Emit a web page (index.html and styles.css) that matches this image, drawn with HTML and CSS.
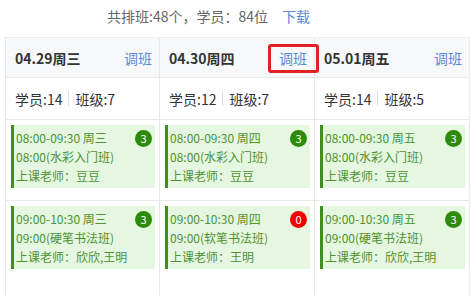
FILE: index.html
```html
<!DOCTYPE html>
<html lang="zh">
<head>
<meta charset="utf-8">
<link rel="stylesheet" href="styles.css">
</head>
<body>
<div class="summary"><span>共排班:48个，学员：84位</span><a class="link">下载</a></div>
<div class="table">
  <div class="cell head"><span class="date">04.29周三</span><a class="link">调班</a></div>
  <div class="cell head"><span class="date">04.30周四</span><a class="link marked">调班</a></div>
  <div class="cell head"><span class="date">05.01周五</span><a class="link">调班</a></div>

  <div class="cell stats"><span>学员:14</span><i class="sep"></i><span>班级:7</span></div>
  <div class="cell stats"><span>学员:12</span><i class="sep"></i><span>班级:7</span></div>
  <div class="cell stats"><span>学员:14</span><i class="sep"></i><span>班级:5</span></div>

  <div class="cell slot"><div class="card"><p>08:00-09:30 周三</p><p>08:00(水彩入门班)</p><p>上课老师：豆豆</p><b class="badge">3</b></div></div>
  <div class="cell slot"><div class="card"><p>08:00-09:30 周四</p><p>08:00(水彩入门班)</p><p>上课老师：豆豆</p><b class="badge">3</b></div></div>
  <div class="cell slot"><div class="card"><p>08:00-09:30 周五</p><p>08:00(水彩入门班)</p><p>上课老师：豆豆</p><b class="badge">3</b></div></div>

  <div class="cell slot last"><div class="card"><p>09:00-10:30 周三</p><p>09:00(硬笔书法班)</p><p>上课老师：欣欣,王明</p><b class="badge">3</b></div></div>
  <div class="cell slot last"><div class="card"><p>09:00-10:30 周四</p><p>09:00(软笔书法班)</p><p>上课老师：王明</p><b class="badge zero">0</b></div></div>
  <div class="cell slot last"><div class="card"><p>09:00-10:30 周五</p><p>09:00(硬笔书法班)</p><p>上课老师：欣欣,王明</p><b class="badge">3</b></div></div>
</div>
</body>
</html>
```

FILE: styles.css
```css
* { box-sizing: border-box; }
html, body { margin: 0; padding: 0; background: #fff; overflow: hidden; }
body {
  font-family: "Noto Sans CJK SC", "Noto Sans", sans-serif;
  font-size: 14px;
  color: #333;
  width: 470px;
  height: 295px;
}
.summary {
  height: 37px;
  padding: 6px 0 0 107px;
  line-height: 20px;
  color: #666;
  display: flex;
  gap: 14px;
}
.link { color: #5b88d6; cursor: pointer; }
.table {
  margin-left: 5px;
  display: grid;
  grid-template-columns: 154px 155px 155px;
  border-left: 1px solid #e8e8e8;
  border-top: 1px solid #ececec;
}
.cell { border-right: 1px solid #e8e8e8; border-bottom: 1px solid #e8e8e8; }
.head {
  height: 40px;
  background: #f7f8fa;
  display: flex;
  align-items: center;
  justify-content: space-between;
  padding: 0 7px 0 9px;
}
.date { font-weight: bold; color: #333; }
.marked { position: relative; }
.marked::after {
  content: "";
  position: absolute;
  left: -11px; right: -12px; top: -4px; bottom: -5px;
  border: 3px solid #e02222;
  border-radius: 3px;
}
.stats {
  height: 42px;
  display: flex;
  align-items: center;
  padding-left: 9px;
  color: #333;
}
.sep { display: inline-block; width: 1px; height: 15px; background: #ddd; margin: 0 6px; }
.slot { height: 81px; padding: 5px 4px 0 5px; }
.slot.last { height: 100px; border-bottom: none; }
.card {
  position: relative;
  height: 63px;
  background: #e5f6e1;
  border-left: 3px solid #3f8f1c;
  padding: 3px 0 0 2px;
  color: #4f9232;
  font-size: 12px;
  line-height: 19px;
}
.card p { margin: 0; white-space: nowrap; }
.badge {
  position: absolute;
  right: 3px; top: 5px;
  width: 17px; height: 17px;
  border-radius: 50%;
  background: #2e8a0b;
  color: #fff;
  font-weight: normal;
  font-size: 11px;
  line-height: 17px;
  text-align: center;
}
.badge.zero { background: #f00000; }
```
